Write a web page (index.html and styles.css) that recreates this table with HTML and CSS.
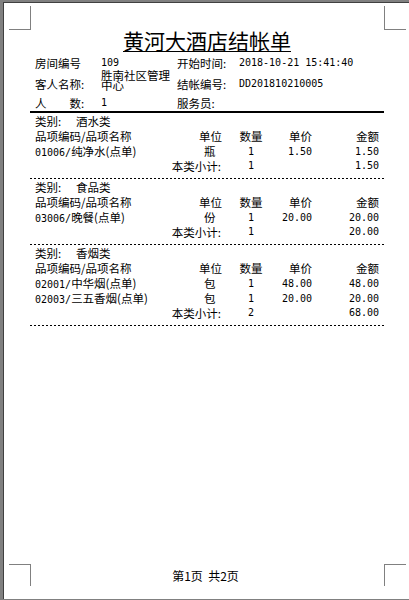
FILE: index.html
```html
<!DOCTYPE html>
<html lang="zh-CN">
<head>
<meta charset="utf-8">
<title>黄河大酒店结帐单</title>
<link rel="stylesheet" href="styles.css">
</head>
<body>
<div class="page">
  <span class="crop crop-tl"></span>
  <span class="crop crop-tr"></span>
  <span class="crop crop-bl"></span>
  <span class="crop crop-br"></span>

  <div class="sheet">
    <h1 class="title">黄河大酒店结帐单</h1>

    <div class="info">
      <div class="info-label">房间编号</div>
      <div class="info-value"><span class="n">109</span></div>
      <div class="info-label">开始时间:</div>
      <div class="info-value"><span class="n">2018-10-21 15:41:40</span></div>

      <div class="info-label">客人名称:</div>
      <div class="info-value info-wrap">胜南社区管理中心</div>
      <div class="info-label">结帐编号:</div>
      <div class="info-value"><span class="n">DD201810210005</span></div>

      <div class="info-label">人&emsp;&emsp;数:</div>
      <div class="info-value"><span class="n">1</span></div>
      <div class="info-label">服务员:</div>
      <div class="info-value"></div>
    </div>

    <div class="rule"></div>

    <section class="cat">
      <div class="cat-title"><span class="cat-key">类别:</span>酒水类</div>
      <div class="row head">
        <div>品项编码/品项名称</div><div class="c-unit-h">单位</div><div class="c-qty">数量</div><div class="c-price">单价</div><div class="c-amt">金额</div>
      </div>
      <div class="row">
        <div><span class="n">01006/</span>纯净水(点单)</div><div class="c-unit">瓶</div><div class="c-qty n">1</div><div class="c-price n">1.50</div><div class="c-amt n">1.50</div>
      </div>
      <div class="row sub">
        <div class="c-sublabel">本类小计:</div><div class="c-qty n">1</div><div class="c-price"></div><div class="c-amt n">1.50</div>
      </div>
    </section>

    <section class="cat">
      <div class="cat-title"><span class="cat-key">类别:</span>食品类</div>
      <div class="row head">
        <div>品项编码/品项名称</div><div class="c-unit-h">单位</div><div class="c-qty">数量</div><div class="c-price">单价</div><div class="c-amt">金额</div>
      </div>
      <div class="row">
        <div><span class="n">03006/</span>晚餐(点单)</div><div class="c-unit">份</div><div class="c-qty n">1</div><div class="c-price n">20.00</div><div class="c-amt n">20.00</div>
      </div>
      <div class="row sub">
        <div class="c-sublabel">本类小计:</div><div class="c-qty n">1</div><div class="c-price"></div><div class="c-amt n">20.00</div>
      </div>
    </section>

    <section class="cat">
      <div class="cat-title"><span class="cat-key">类别:</span>香烟类</div>
      <div class="row head">
        <div>品项编码/品项名称</div><div class="c-unit-h">单位</div><div class="c-qty">数量</div><div class="c-price">单价</div><div class="c-amt">金额</div>
      </div>
      <div class="row">
        <div><span class="n">02001/</span>中华烟(点单)</div><div class="c-unit">包</div><div class="c-qty n">1</div><div class="c-price n">48.00</div><div class="c-amt n">48.00</div>
      </div>
      <div class="row">
        <div><span class="n">02003/</span>三五香烟(点单)</div><div class="c-unit">包</div><div class="c-qty n">1</div><div class="c-price n">20.00</div><div class="c-amt n">20.00</div>
      </div>
      <div class="row sub">
        <div class="c-sublabel">本类小计:</div><div class="c-qty n">2</div><div class="c-price"></div><div class="c-amt n">68.00</div>
      </div>
    </section>
  </div>

  <footer class="pager">第1页&nbsp;&nbsp;共2页</footer>
</div>
</body>
</html>
```

FILE: styles.css
```css
html, body {
  margin: 0;
  padding: 0;
}

body {
  background: #808080;
  font-family: "Noto Sans CJK SC", "Noto Sans CJK JP", sans-serif;
  font-size: 11.5px;
  color: #000;
}

.page {
  position: relative;
  margin: 2px 0 0 3px;
  height: 597px;
  box-sizing: border-box;
  border-left: 1px solid #404040;
  border-top: 1px solid #404040;
  background: #fff;
  display: flex;
  flex-direction: column;
}

.crop {
  position: absolute;
  width: 21px;
  height: 23px;
  border: 0 solid #808080;
}
.crop-tl { left: 5px; top: 3px; border-right-width: 1px; border-bottom-width: 1px; }
.crop-tr { left: 380px; top: 3px; border-left-width: 1px; border-bottom-width: 1px; }
.crop-bl { left: 5px; top: 561px; height: 21px; border-right-width: 1px; border-top-width: 1px; }
.crop-br { left: 380px; top: 561px; height: 21px; border-left-width: 1px; border-top-width: 1px; }

.sheet {
  margin-left: 26px;
  width: 354px;
  padding-top: 26px;
}

.n {
  font-family: "DejaVu Sans Mono", "Liberation Mono", monospace;
  font-size: 10px;
}

.title {
  margin: 0;
  text-align: center;
  font-size: 21px;
  font-weight: 400;
  line-height: 22px;
  text-decoration: underline;
  text-decoration-thickness: 1px;
  text-underline-offset: 2px;
}

.info {
  display: grid;
  grid-template-columns: 66px 76px 62px 1fr;
  grid-template-rows: 18px 21px 19px;
  align-items: end;
  padding-left: 5px;
  line-height: 12px;
}

.info-wrap {
  line-height: 9.5px;
  width: 70px;
}

.rule {
  margin-top: 2px;
  height: 2px;
  background: #000;
}

.cat {
  padding: 1px 5px 6px;
  background-image: repeating-linear-gradient(90deg, #000 0 2px, transparent 2px 4px);
  background-size: 100% 1px;
  background-repeat: no-repeat;
  background-position: left bottom;
}

.cat-title {
  line-height: 15px;
  height: 15px;
}
.cat-key {
  display: inline-block;
  width: 41px;
}

.row {
  display: grid;
  grid-template-columns: 164px 32px 40px 41px 67px;
  height: 15px;
  line-height: 15px;
  white-space: nowrap;
}

.row.sub {
  height: 14px;
  line-height: 14px;
}

.c-unit { padding-left: 5px; }
.c-qty { text-align: center; }
.c-price { text-align: right; }
.c-amt { text-align: right; }

.c-sublabel {
  grid-column: 1 / 3;
  text-align: right;
  padding-right: 10px;
}

.pager {
  margin-top: auto;
  margin-bottom: 16px;
  text-align: center;
  font-size: 12px;
  line-height: 14px;
  padding-right: 2px;
}
```
